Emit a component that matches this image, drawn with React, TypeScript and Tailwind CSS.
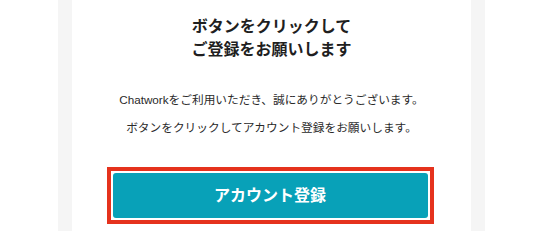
export default function App() {
  return (
    <div
      className="flex h-[231px] w-full overflow-hidden bg-white"
      style={{ fontFamily: '"Liberation Sans", "Noto Sans CJK JP", sans-serif' }}
    >
      {/* 外枠 */}
      <div className="ml-[58px] h-full w-[427px] bg-[#f5f5f5] px-[14px]">
        {/* カード */}
        <div className="flex h-full flex-col items-center bg-white pt-[15px]">
          <h1 className="text-center text-[16px] font-bold leading-[23px] text-[#1f1f1f]">
            ボタンをクリックして
            <br />
            ご登録をお願いします
          </h1>

          <div className="mt-[25px] text-center text-[11.7px] leading-[28px] text-[#2a2a2a]">
            <p>Chatworkをご利用いただき、誠にありがとうございます。</p>
            <p>ボタンをクリックしてアカウント登録をお願いします。</p>
          </div>

          {/* 登録ボタン */}
          <div className="-ml-[3px] mt-[25px] border-4 border-[#e5321d] bg-white p-[2px]">
            <button className="flex h-[45px] w-[315px] items-center justify-center rounded-[3px] bg-[#08a1b8] text-[16px] font-bold text-white">
              アカウント登録
            </button>
          </div>
        </div>
      </div>
    </div>
  );
}
